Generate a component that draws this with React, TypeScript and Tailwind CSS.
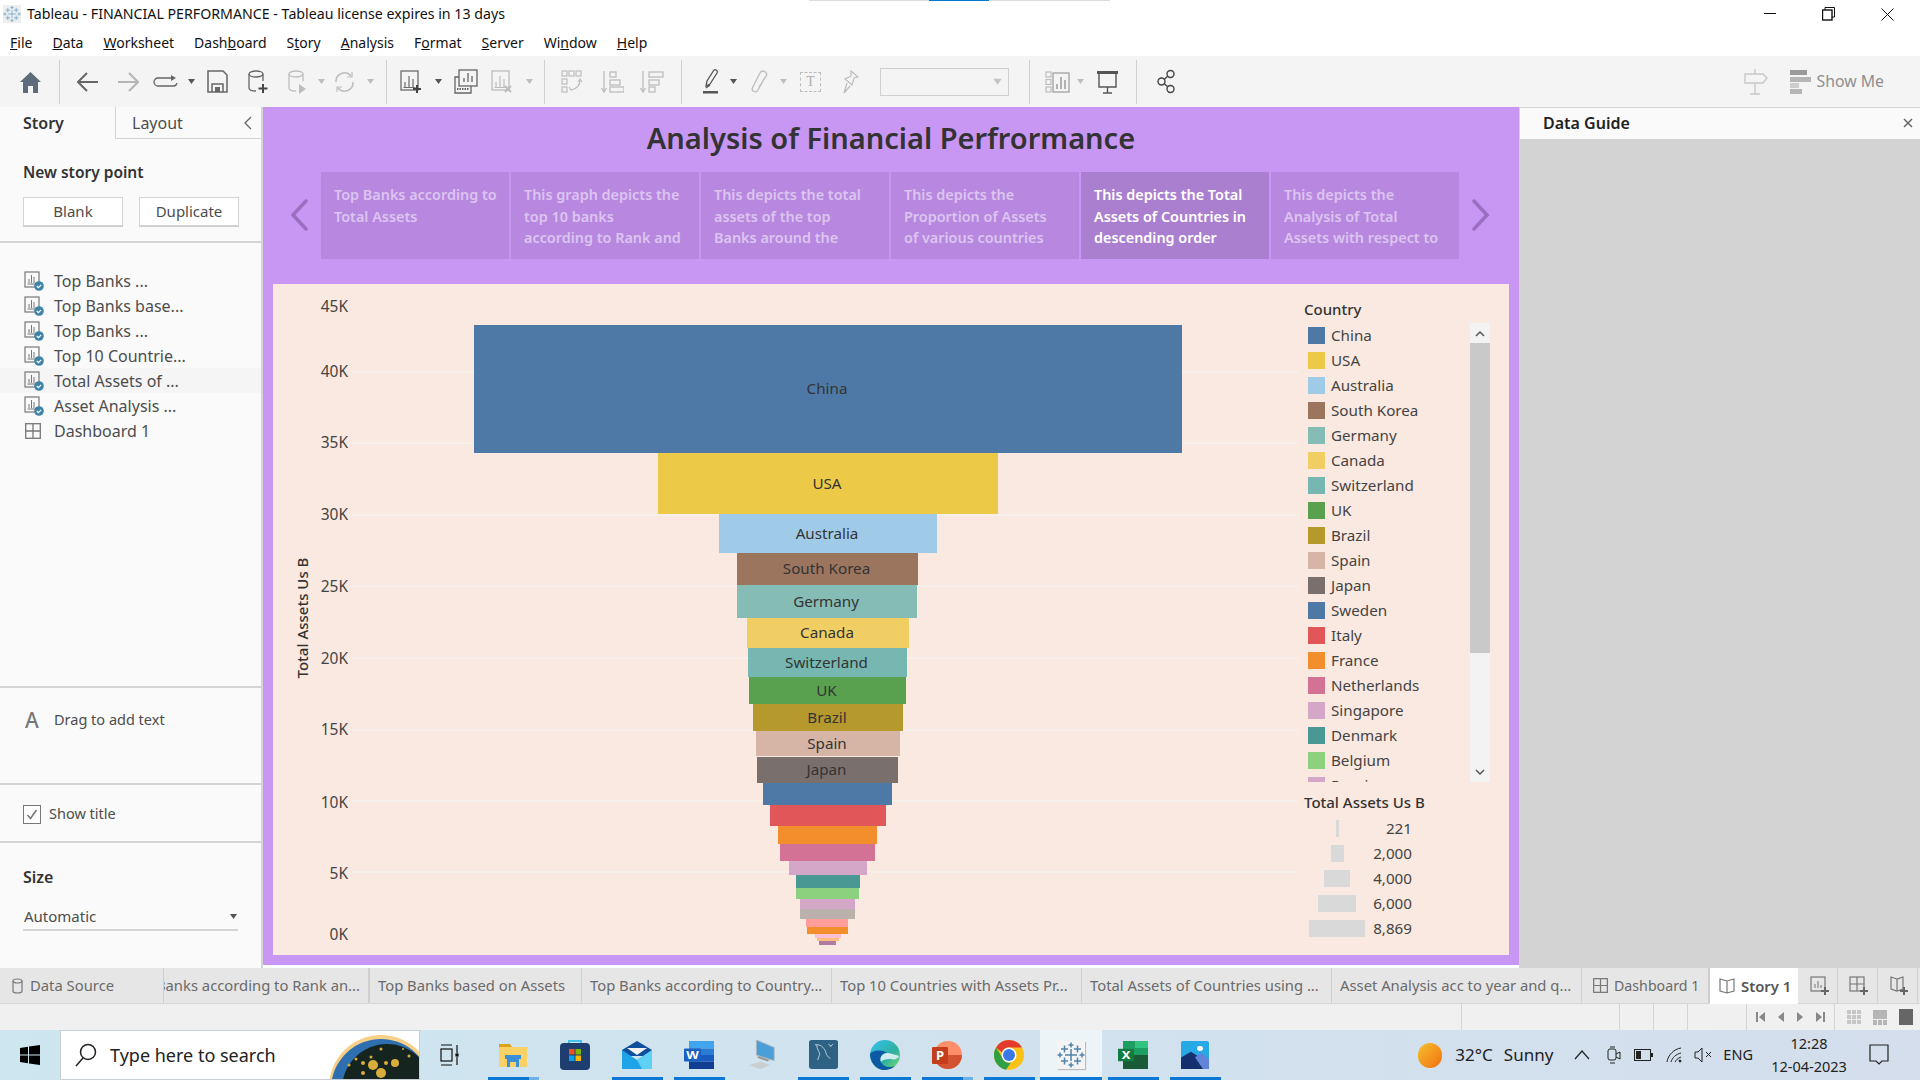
import React from 'react';

const ui = "font-['Noto_Sans','Open_Sans',sans-serif]";

const bars: { x1: number; x2: number; y1: number; y2: number; c: string; label?: string }[] = [
  { x1: 474, x2: 1182, y1: 325, y2: 453, c: '#4e79a7', label: 'China' },
  { x1: 658, x2: 998, y1: 453, y2: 514, c: '#edc948', label: 'USA' },
  { x1: 719, x2: 937, y1: 514, y2: 553, c: '#a0cbe8', label: 'Australia' },
  { x1: 737, x2: 918, y1: 553, y2: 585, c: '#9c755f', label: 'South Korea' },
  { x1: 737, x2: 917, y1: 585, y2: 618, c: '#86bcb6', label: 'Germany' },
  { x1: 747, x2: 909, y1: 618, y2: 648, c: '#f1ce63', label: 'Canada' },
  { x1: 748, x2: 907, y1: 648, y2: 677, c: '#76b7b2', label: 'Switzerland' },
  { x1: 749, x2: 906, y1: 677, y2: 704, c: '#59a14f', label: 'UK' },
  { x1: 753, x2: 903, y1: 704, y2: 731, c: '#b6992d', label: 'Brazil' },
  { x1: 756, x2: 900, y1: 731, y2: 756, c: '#d7b5a6', label: 'Spain' },
  { x1: 757, x2: 898, y1: 757, y2: 783, c: '#79706e', label: 'Japan' },
  { x1: 763, x2: 892, y1: 783, y2: 805, c: '#4e79a7' },
  { x1: 770, x2: 886, y1: 805, y2: 826, c: '#e15759' },
  { x1: 778, x2: 877, y1: 826, y2: 844, c: '#f28e2b' },
  { x1: 780, x2: 875, y1: 844, y2: 861, c: '#d37295' },
  { x1: 789, x2: 867, y1: 861, y2: 875, c: '#d4a6c8' },
  { x1: 796, x2: 860, y1: 875, y2: 888, c: '#499894' },
  { x1: 796, x2: 859, y1: 888, y2: 899, c: '#8cd17d' },
  { x1: 800, x2: 855, y1: 899, y2: 909, c: '#d4a6c8' },
  { x1: 800, x2: 855, y1: 909, y2: 919, c: '#bab0ac' },
  { x1: 806, x2: 848, y1: 919, y2: 927, c: '#ff9d9a' },
  { x1: 807, x2: 848, y1: 927, y2: 934, c: '#f28e2b' },
  { x1: 815, x2: 841, y1: 934, y2: 938, c: '#fabfd2' },
  { x1: 817, x2: 839, y1: 938, y2: 941, c: '#ffbe7d' },
  { x1: 819, x2: 836, y1: 941, y2: 945, c: '#b07aa1' },
];

const legend: [string, string][] = [
  ['China', '#4e79a7'], ['USA', '#edc948'], ['Australia', '#a0cbe8'], ['South Korea', '#9c755f'],
  ['Germany', '#86bcb6'], ['Canada', '#f1ce63'], ['Switzerland', '#76b7b2'], ['UK', '#59a14f'],
  ['Brazil', '#b6992d'], ['Spain', '#d7b5a6'], ['Japan', '#79706e'], ['Sweden', '#4e79a7'],
  ['Italy', '#e15759'], ['France', '#f28e2b'], ['Netherlands', '#d37295'], ['Singapore', '#d4a6c8'],
  ['Denmark', '#499894'], ['Belgium', '#8cd17d'], ['Russia', '#d4a6c8'],
];

const axis: [string, number][] = [
  ['45K', 307], ['40K', 372], ['35K', 443], ['30K', 515], ['25K', 587],
  ['20K', 659], ['15K', 730], ['10K', 803], ['5K', 874], ['0K', 935],
];

const grid = [372, 443, 515, 586, 658, 730, 801, 872];

const storyPoints = [
  ['Top Banks according to', 'Total Assets'],
  ['This graph depicts the', 'top 10 banks', 'according to Rank and'],
  ['This depicts the total', 'assets of the top', 'Banks around the'],
  ['This depicts the', 'Proportion of Assets', 'of various countries'],
  ['This depicts the Total', 'Assets of Countries in', 'descending order'],
  ['This depicts the', 'Analysis of Total', 'Assets with respect to'],
];

const sheets = ['Top Banks ...', 'Top Banks base...', 'Top Banks ...', 'Top 10 Countrie...', 'Total Assets of ...', 'Asset Analysis ...'];

const menu: [string, string, string][] = [
  ['', 'F', 'ile'], ['', 'D', 'ata'], ['', 'W', 'orksheet'], ['Dash', 'b', 'oard'], ['S', 't', 'ory'],
  ['', 'A', 'nalysis'], ['F', 'o', 'rmat'], ['', 'S', 'erver'], ['Wi', 'n', 'dow'], ['', 'H', 'elp'],
];

function Caret({ className = '', color = '#555' }: { className?: string; color?: string }) {
  return (
    <svg width="7" height="5" viewBox="0 0 7 5" className={className}>
      <path d="M0 0h7L3.5 5z" fill={color} />
    </svg>
  );
}

function Sep({ className = '' }: { className?: string }) {
  return <div className={`h-[44px] w-px bg-[#d0d0d0] ${className}`} />;
}

function SheetIcon({ className = '', plus = false, x = false, color = '#6b6b6b' }: { className?: string; plus?: boolean; x?: boolean; color?: string }) {
  return (
    <svg width="22" height="24" viewBox="0 0 22 24" className={className} fill="none">
      <rect x="1" y="1" width="17" height="19" stroke={color} strokeWidth="1.3" />
      <path d="M5 17v-5M9 17V6M13 17V9M3.5 17.5h12" stroke={color} strokeWidth="1.2" />
      {plus && <path d="M17 15v8M13 19h8" stroke="#444" strokeWidth="2" />}
      {x && <path d="M14 16l6 6M20 16l-6 6" stroke={color} strokeWidth="2" />}
    </svg>
  );
}

function DbIcon({ className = '', color = '#666', kind }: { className?: string; color?: string; kind: 'plus' | 'play' }) {
  return (
    <svg width="20" height="26" viewBox="0 0 20 26" className={className} fill="none">
      <path d="M1 5v14c0 2 3 3 7 3M15 5v7" stroke={color} strokeWidth="1.3" />
      <ellipse cx="8" cy="5" rx="7" ry="3" stroke={color} strokeWidth="1.3" />
      {kind === 'plus' ? <path d="M15 15v9M10.500 19.500h9" stroke="#444" strokeWidth="2" /> : <path d="M11 15l7 5-7 5z" fill={color} />}
    </svg>
  );
}

function Toolbar() {
  const off = '#bdbdbd';
  return (
    <div className="flex h-[51px] items-center bg-[#f4f4f4]">
      <svg width="21" height="22" viewBox="0 0 21 22" className="ml-[20px]">
        <path d="M10.500 1L0 11h3v11h5v-7h5v7h5V11h3z" fill="#5d6b7a" />
      </svg>
      <Sep className="ml-[18px]" />
      <svg width="22" height="20" viewBox="0 0 22 20" className="ml-[17px]" fill="none">
        <path d="M21 10H2M10 1l-9 9 9 9" stroke="#666" strokeWidth="2" />
      </svg>
      <svg width="22" height="20" viewBox="0 0 22 20" className="ml-[18px]" fill="none">
        <path d="M1 10h19M12 1l9 9-9 9" stroke="#b4b4b4" strokeWidth="2" />
      </svg>
      <svg width="26" height="14" viewBox="0 0 26 14" className="ml-[14px]" fill="none">
        <path d="M19 3H5a4 4 0 0 0 0 8h16a4 4 0 0 0 3-3" stroke="#666" strokeWidth="1.300" />
        <path d="M18 0l5 3-5 3z" fill="#666" />
      </svg>
      <Caret className="ml-[9px]" />
      <svg width="21" height="23" viewBox="0 0 21 23" className="ml-[12px]" fill="none">
        <path d="M1 1h15l4 4v17H1z" stroke="#666" strokeWidth="1.500" />
        <path d="M5 22v-8h11v8" stroke="#666" strokeWidth="1.500" />
        <rect x="8" y="17" width="5" height="5" fill="#666" />
      </svg>
      <DbIcon className="ml-[20px]" kind="plus" />
      <DbIcon className="ml-[20px]" kind="play" color={off} />
      <Caret className="ml-[10px]" color={off} />
      <svg width="21" height="22" viewBox="0 0 21 22" className="ml-[9px]" fill="none">
        <path d="M2 11a8.500 8.500 0 0 1 15-6M19 11a8.500 8.500 0 0 1-15 6" stroke={off} strokeWidth="1.500" />
        <path d="M18 1v5h-5M3 21v-5h5" stroke={off} strokeWidth="1.200" />
      </svg>
      <Caret className="ml-[12px]" color={off} />
      <Sep className="ml-[12px]" />
      <SheetIcon className="ml-[13px]" plus />
      <Caret className="ml-[13px]" />
      <svg width="24" height="25" viewBox="0 0 24 25" className="ml-[12px]" fill="none">
        <rect x="5" y="1" width="18" height="16" fill="#f4f4f4" stroke="#666" strokeWidth="1.300" />
        <path d="M10 13V9M14 13V4M18 13V7" stroke="#666" strokeWidth="1.300" />
        <path d="M5 8H1v16h16v-7" stroke="#666" strokeWidth="1.300" />
        <path d="M3 20h12" stroke="#666" strokeWidth="2" strokeDasharray="1.500 1" />
      </svg>
      <SheetIcon className="ml-[13px]" x color={off} />
      <Caret className="ml-[13px]" color={off} />
      <Sep className="ml-[11px]" />
      <svg width="22" height="24" viewBox="0 0 22 24" className="ml-[16px]" fill="none" stroke={off} strokeWidth="1.200">
        <rect x="1" y="1" width="5" height="5" /><rect x="8" y="1" width="5" height="5" /><rect x="15" y="1" width="5" height="5" />
        <rect x="1" y="9" width="5" height="5" /><rect x="1" y="17" width="5" height="5" />
        <path d="M19 10c0 7-4 9-9 10M8 17l2 3 3-1M17 12l2-3 2 3" />
      </svg>
      <svg width="23" height="24" viewBox="0 0 23 24" className="ml-[18px]" fill="none" stroke={off} strokeWidth="1.300">
        <path d="M3 1v20M0.500 18L3 22l2.500-4" />
        <rect x="9" y="2" width="6" height="5" /><rect x="9" y="10" width="10" height="5" /><rect x="9" y="17" width="14" height="5" />
      </svg>
      <svg width="24" height="24" viewBox="0 0 24 24" className="ml-[16px]" fill="none" stroke={off} strokeWidth="1.300">
        <path d="M3 1v20M0.500 18L3 22l2.500-4" />
        <rect x="9" y="2" width="14" height="5" /><rect x="9" y="10" width="10" height="5" /><rect x="9" y="17" width="6" height="5" />
      </svg>
      <Sep className="ml-[17px]" />
      <svg width="17" height="26" viewBox="0 0 17 26" className="ml-[21px]" fill="none">
        <path d="M3 17l1-5L11 1c2-1 4 1 3 3L7 15zM3 19l4-3" stroke="#555" strokeWidth="1.300" />
        <rect x="0" y="22" width="15" height="2.500" fill="#555" />
      </svg>
      <Caret className="ml-[10px]" />
      <svg width="17" height="24" viewBox="0 0 17 24" className="ml-[14px]" fill="none">
        <path d="M14 7L7 20a3 3 0 0 1-5.500-2.500L9 3a3.500 3.500 0 0 1 6.500 2.500L8 17" stroke={off} strokeWidth="1.300" />
      </svg>
      <Caret className="ml-[12px]" color={off} />
      <div className="ml-[13px] flex h-[20px] w-[21px] items-center justify-center border border-dashed border-[#bdbdbd] text-[14px] text-[#b0b0b0] font-['Liberation_Serif',serif]">T</div>
      <svg width="17" height="24" viewBox="0 0 17 24" className="ml-[21px]" fill="none">
        <path d="M9 1l7 6-4 1-2 7-7-6 6-3zM5 13l-3 10 6-7" stroke={off} strokeWidth="1.200" />
      </svg>
      <div className="ml-[21px] flex h-[28px] w-[129px] items-center justify-end border border-[#cfcfcf] pr-[7px]">
        <Caret color="#c4c4c4" className="scale-125" />
      </div>
      <Sep className="ml-[20px]" />
      <svg width="25" height="22" viewBox="0 0 25 22" className="ml-[15px]" fill="none">
        <g stroke={off} strokeWidth="1.200">
          <rect x="1" y="1" width="5" height="5" /><rect x="1" y="8.500" width="5" height="5" /><rect x="1" y="16" width="5" height="5" />
          <rect x="8" y="2" width="16" height="19" stroke="#9a9a9a" />
        </g>
        <path d="M12 18v-5M16 18V6M20 18v-9" stroke="#9a9a9a" strokeWidth="1.500" />
      </svg>
      <Caret className="ml-[7px]" color={off} />
      <svg width="21" height="24" viewBox="0 0 21 24" className="ml-[13px]" fill="none">
        <rect x="0" y="1" width="21" height="3" fill="#555" />
        <path d="M2 4v13h17V4M10.500 17v6M6 23h9" stroke="#555" strokeWidth="1.400" />
      </svg>
      <Sep className="ml-[18px]" />
      <svg width="19" height="25" viewBox="0 0 19 25" className="ml-[20px]" fill="none" stroke="#444" strokeWidth="1.400">
        <circle cx="13.500" cy="5" r="3.500" /><circle cx="4.500" cy="12.500" r="3.500" /><circle cx="13.500" cy="20" r="3.500" />
        <path d="M7 10.500l4-3.500M7 14.500l4 3.500" />
      </svg>
      <svg width="24" height="28" viewBox="0 0 24 28" className="ml-auto" fill="none" stroke="#c8c8c8" strokeWidth="1.400">
        <path d="M1 6h18l4 4-4 5H1zM11 1v5M11 15v11M6 26h10" />
      </svg>
      <svg width="21" height="24" viewBox="0 0 21 24" className="ml-[22px]">
        <rect x="0" y="0" width="17" height="5" fill="#9a9a9a" /><rect x="0" y="7" width="21" height="5" fill="#b5b5b5" />
        <rect x="0" y="13" width="9" height="5" fill="#cdcdcd" /><rect x="0" y="19" width="12" height="5" fill="#b5b5b5" />
      </svg>
      <span className={`ml-[6px] mr-[36px] text-[15.800px] text-[#8f8f8f] ${ui}`}>Show Me</span>
    </div>
  );
}

function SideSheetIcon() {
  return (
    <svg width="20" height="20" viewBox="0 0 20 20" fill="none" className="shrink-0">
      <rect x="1" y="1" width="14" height="15" stroke="#777" strokeWidth="1.200" />
      <path d="M5 12V8M7.500 12V4M10 12V6M3.500 13h8" stroke="#777" strokeWidth="1" />
      <circle cx="15" cy="15" r="4.800" fill="#3f84a8" />
      <path d="M12.800 15l1.600 1.600 2.800-2.800" stroke="#fff" strokeWidth="1.200" />
    </svg>
  );
}

function GridIcon({ size = 16 }: { size?: number }) {
  return (
    <svg width={size} height={size} viewBox="0 0 16 16" fill="none" className="shrink-0">
      <rect x="0.700" y="0.700" width="14.600" height="14.600" stroke="#777" strokeWidth="1.300" />
      <path d="M8 1v14M1 8h14" stroke="#777" strokeWidth="1.300" />
    </svg>
  );
}

function LeftPanel() {
  return (
    <aside className={`flex h-full w-[263px] shrink-0 flex-col border-r-2 border-[#d4d4d4] bg-[#fafafa] text-[#4d4d4d] ${ui}`}>
      <div className="flex h-[32px] shrink-0 text-[16px]">
        <div className="flex w-[115px] items-center pl-[23px] font-semibold text-[#333]">Story</div>
        <div className="flex flex-1 items-center justify-between border-b border-l border-[#d4d4d4] pl-[16px] pr-[9px]">
          <span>Layout</span>
          <svg width="8" height="14" viewBox="0 0 8 14" fill="none"><path d="M7 1L1 7l6 6" stroke="#666" strokeWidth="1.300" /></svg>
        </div>
      </div>
      <div className="h-[104px] shrink-0 border-b-2 border-[#d4d4d4] pl-[23px] pt-[22px]">
        <div className="text-[15.500px] font-semibold leading-[22px] text-[#333]">New story point</div>
        <div className="mt-[14px] flex gap-[16px] text-[15px]">
          <div className="flex h-[29px] w-[100px] items-center justify-center border border-[#d4d4d4] bg-white shadow-[0_1px_0_#ccc]">Blank</div>
          <div className="flex h-[29px] w-[100px] items-center justify-center border border-[#d4d4d4] bg-white shadow-[0_1px_0_#ccc]">Duplicate</div>
        </div>
      </div>
      <div className="h-[445px] shrink-0 border-b-2 border-[#d4d4d4] pt-[25px] text-[16px]">
        {sheets.map((s, i) => (
          <div key={i} className={`flex h-[25px] items-center gap-[10px] pl-[24px] ${i === 4 ? 'bg-[#f5f5f5]' : ''}`}>
            <SideSheetIcon />
            <span>{s}</span>
          </div>
        ))}
        <div className="flex h-[25px] items-center gap-[13px] pl-[25px]">
          <GridIcon />
          <span>Dashboard 1</span>
        </div>
      </div>
      <div className="h-[97px] shrink-0 border-b-2 border-[#d4d4d4] pl-[25px] pt-[19px] text-[14.500px]">
        <div className="flex items-center gap-[15px]">
          <span className="w-[14px] text-[21px] font-medium leading-[26px] text-[#777]">A</span>
          <span>Drag to add text</span>
        </div>
      </div>
      <div className="flex h-[58px] shrink-0 items-center gap-[8px] border-b-2 border-[#d4d4d4] pl-[23px] pt-[2px] text-[14.500px]">
        <div className="flex h-[19px] w-[18px] items-center justify-center border border-[#777] bg-white">
          <svg width="12" height="11" viewBox="0 0 12 11" fill="none"><path d="M1.500 6l3 3.500L10.500 1" stroke="#777" strokeWidth="1.600" /></svg>
        </div>
        <span>Show title</span>
      </div>
      <div className="flex-1 pl-[23px] pr-[23px] pt-[23px]">
        <div className="text-[16px] font-semibold leading-[22px] text-[#333]">Size</div>
        <div className="mt-[15px] flex h-[28px] items-center justify-between border-b-2 border-[#d4d4d4] px-px text-[15px]">
          <span>Automatic</span>
          <Caret />
        </div>
      </div>
    </aside>
  );
}

function Chart() {
  return (
    <svg width="1030" height="671" viewBox="273 284 1030 671" className={`shrink-0 ${ui}`}>
      {grid.map(y => (
        <line key={y} x1="352" x2="1298" y1={y} y2={y} stroke="#f6f1ed" strokeWidth="1.500" />
      ))}
      {bars.map((b, i) => (
        <rect key={i} x={b.x1} y={b.y1} width={b.x2 - b.x1} height={b.y2 - b.y1} fill={b.c} />
      ))}
      {bars.filter(b => b.label).map(b => (
        <text key={b.label} x={(b.x1 + b.x2) / 2 - 1} y={(b.y1 + b.y2) / 2 + 5} textAnchor="middle" fontSize="15.200" fill="#333">{b.label}</text>
      ))}
      {axis.map(([t, y]) => (
        <text key={t} x="348" y={y + 5} textAnchor="end" fontSize="15.500" fill="#444">{t}</text>
      ))}
      <text x="0" y="0" transform="translate(308 618) rotate(-90)" textAnchor="middle" fontSize="15" fontWeight="500" fill="#333">Total Assets Us B</text>
    </svg>
  );
}

function Legends() {
  const sizes: [string, string, string][] = [
    ['221', 'w-[3px]', 'ml-[27px]'],
    ['2,000', 'w-[13px]', 'ml-[22px]'],
    ['4,000', 'w-[26px]', 'ml-[15px]'],
    ['6,000', 'w-[38px]', 'ml-[9px]'],
    ['8,869', 'w-[56px]', 'ml-0'],
  ];
  return (
    <div className={`flex flex-1 flex-col pl-[1px] pt-[14px] text-[15.200px] text-[#444] ${ui}`}>
      <div className="text-[15px] font-medium leading-[22px] text-[#333]">Country</div>
      <div className="mt-[3px] flex h-[459px]">
        <div className="h-full w-[166px] overflow-hidden">
          {legend.map(([name, c]) => (
            <div key={name} className="flex h-[25px] shrink-0 items-center gap-[6px] pl-[4px]">
              <span className="h-[17px] w-[17px] shrink-0" style={{ background: c }} />
              <span>{name}</span>
            </div>
          ))}
        </div>
        <div className="flex h-full w-[20px] flex-col bg-[#f3f3f3]">
          <div className="flex h-[20px] items-center justify-center">
            <svg width="10" height="7" viewBox="0 0 10 7" fill="none"><path d="M1 6l4-4 4 4" stroke="#555" strokeWidth="1.500" /></svg>
          </div>
          <div className="h-[310px] bg-[#c9c9c9]" />
          <div className="flex-1" />
          <div className="flex h-[20px] items-center justify-center">
            <svg width="10" height="7" viewBox="0 0 10 7" fill="none"><path d="M1 1l4 4 4-4" stroke="#555" strokeWidth="1.500" /></svg>
          </div>
        </div>
      </div>
      <div className="mt-[9px] text-[15px] font-medium leading-[22px] text-[#333]">Total Assets Us B</div>
      <div className="mt-[3px] pl-[5px]">
        {sizes.map(([t, w, ml]) => (
          <div key={t} className="flex h-[25px] w-[103px] items-center">
            <span className={`h-[17px] bg-[#d9d9d9] ${w} ${ml}`} />
            <span className="ml-auto">{t}</span>
          </div>
        ))}
      </div>
    </div>
  );
}

function StoryPanel() {
  return (
    <main className={`flex h-[858px] w-[1256px] shrink-0 flex-col bg-[#c896f3] ${ui}`}>
      <h1 className="flex h-[62px] shrink-0 items-center justify-center text-[29px] font-semibold text-[#333]">Analysis of Financial Perfrormance</h1>
      <div className="mt-[3px] flex h-[87px] shrink-0 items-center">
        <div className="flex w-[58px] justify-center pl-[14px] pb-[2px]">
          <svg width="18" height="32" viewBox="0 0 18 32" fill="none"><path d="M16 2L3 16l13 14" stroke="#9a6fc0" strokeWidth="3.500" strokeLinecap="round" /></svg>
        </div>
        <div className="flex gap-[2px]">
          {storyPoints.map((lines, i) => (
            <div key={i} className={`h-[87px] w-[188px] overflow-hidden px-[13px] pt-[12px] text-[14.400px] font-semibold leading-[21.500px] ${i === 4 ? 'bg-[#ab7fcf] text-white' : 'bg-[#b888e0] text-[#dcc4f0]'}`}>
              {lines.map(l => <div key={l} className="whitespace-nowrap">{l}</div>)}
            </div>
          ))}
        </div>
        <div className="flex flex-1 justify-center pb-[2px] pr-[16px]">
          <svg width="18" height="32" viewBox="0 0 18 32" fill="none"><path d="M2 2l13 14L2 30" stroke="#9a6fc0" strokeWidth="3.500" strokeLinecap="round" /></svg>
        </div>
      </div>
      <div className="ml-[10px] mt-[25px] flex h-[671px] w-[1236px] bg-[#fae9e0]">
        <Chart />
        <Legends />
      </div>
    </main>
  );
}

function RightPanel() {
  return (
    <aside className={`flex h-full flex-1 flex-col border-l border-t border-[#d4d4d4] bg-[#d3d3d3] ${ui}`}>
      <div className="flex h-[31px] items-center justify-between bg-[#fafafa] pb-[1px] pl-[23px] pr-[7px]">
        <span className="text-[16px] font-semibold text-[#222]">Data Guide</span>
        <svg width="10" height="10" viewBox="0 0 10 10" fill="none"><path d="M1 1l8 8M9 1L1 9" stroke="#666" strokeWidth="1.500" /></svg>
      </div>
    </aside>
  );
}

function Tab({ children, w, first = false }: { children: React.ReactNode; w: string; first?: boolean }) {
  return (
    <div className={`flex h-full shrink-0 items-center overflow-hidden whitespace-nowrap border-r border-[#cfcfcf] ${w} ${first ? 'pl-[12px]' : 'pl-[8px]'}`}>
      {children}
    </div>
  );
}

function SheetTabs() {
  return (
    <div className={`flex h-[36px] items-stretch border-b border-[#d6d6d6] bg-[#e6e6e6] text-[14.800px] text-[#6a6a6a] ${ui}`}>
      <Tab w="w-[164px]" first>
        <svg width="11" height="16" viewBox="0 0 11 16" fill="none" className="mr-[7px]">
          <path d="M1 3v10c0 1.500 1.800 2 4.500 2s4.500-.5 4.500-2V3" stroke="#777" strokeWidth="1.200" />
          <ellipse cx="5.500" cy="3" rx="4.500" ry="2" stroke="#777" strokeWidth="1.200" />
        </svg>
        Data Source
      </Tab>
      <div className="flex h-full w-[206px] shrink-0 items-center justify-end overflow-hidden whitespace-nowrap border-r-2 border-[#cfcfcf] pr-[8px]">Top Banks according to Rank an...</div>
      <Tab w="w-[212px]">Top Banks based on Assets</Tab>
      <Tab w="w-[250px]">Top Banks according to Country...</Tab>
      <Tab w="w-[250px]">Top 10 Countries with Assets Pr...</Tab>
      <Tab w="w-[250px]">Total Assets of Countries using ...</Tab>
      <Tab w="w-[250px]">Asset Analysis acc to year and q...</Tab>
      <div className="flex h-full w-[128px] shrink-0 items-center gap-[6px] border-r-2 border-[#cfcfcf] pl-[11px] text-[14.200px]">
        <GridIcon size={15} />Dashboard 1
      </div>
      <div className="flex h-[36px] w-[88px] shrink-0 items-center gap-[6px] bg-white pl-[9px] font-semibold text-[#555]">
        <svg width="16" height="16" viewBox="0 0 16 16" fill="none"><path d="M8 3L1 1v12l7 2 7-2V1zM8 3v12" stroke="#777" strokeWidth="1.200" /></svg>
        Story 1
      </div>
      {[0, 1, 2].map(i => (
        <div key={i} className={`flex w-[40px] shrink-0 items-center justify-center border-r border-[#cfcfcf] ${i === 0 ? 'pl-[4px]' : 'pl-[2px]'}`}>
          <svg width="20" height="20" viewBox="0 0 20 20" fill="none">
            {i === 0 && <><rect x="1" y="1" width="14" height="14" stroke="#777" strokeWidth="1.200" /><path d="M5 12V8M8 12V5M11 12V9" stroke="#777" /></>}
            {i === 1 && <><rect x="1" y="1" width="14" height="14" stroke="#777" strokeWidth="1.200" /><path d="M8 1v14M1 8h14" stroke="#777" strokeWidth="1.200" /></>}
            {i === 2 && <path d="M8 3L2 1v12l6 2 6-2V1zM8 3v12" stroke="#777" strokeWidth="1.200" />}
            <path d="M15 11v8M11 15h8" stroke="#666" strokeWidth="2" />
          </svg>
        </div>
      ))}
    </div>
  );
}

function StatusBar() {
  return (
    <div className="flex h-[26px] items-stretch bg-[#f0f0f0]">
      <div className="w-[1462px] shrink-0 border-r border-[#d4d4d4]" />
      <div className="w-[158px] shrink-0 border-r border-[#d4d4d4]" />
      <div className="w-[34px] shrink-0 border-r border-[#d4d4d4]" />
      <div className="w-[34px] shrink-0 border-r border-[#d4d4d4]" />
      <div className="w-[59px] shrink-0 border-r border-[#d4d4d4]" />
      <div className="flex w-[88px] shrink-0 items-center justify-center gap-[13px] border-r border-[#d4d4d4]">
        <svg width="9" height="10" viewBox="0 0 9 10"><path d="M0 0h2v10H0zM9 0v10L3 5z" fill="#888" /></svg>
        <svg width="6" height="10" viewBox="0 0 6 10"><path d="M6 0v10L0 5z" fill="#888" /></svg>
        <svg width="6" height="10" viewBox="0 0 6 10"><path d="M0 0v10l6-5z" fill="#888" /></svg>
        <svg width="9" height="10" viewBox="0 0 9 10"><path d="M7 0h2v10H7zM0 0v10l6-5z" fill="#888" /></svg>
      </div>
      <div className="flex flex-1 items-center gap-[12px] pl-[12px]">
        <svg width="14" height="15" viewBox="0 0 14 15" fill="#c6c6c6">
          {[0, 5, 10].flatMap(x => [0, 5, 10].map(y => <rect key={`${x}-${y}`} x={x} y={y} width="4" height="4" />))}
        </svg>
        <svg width="14" height="15" viewBox="0 0 14 15"><rect width="14" height="9" fill="#b5b5b5" /><rect y="10" width="4" height="5" fill="#b5b5b5" /><rect x="5" y="10" width="4" height="5" fill="#b5b5b5" /><rect x="10" y="10" width="4" height="5" fill="#b5b5b5" /></svg>
        <svg width="14" height="16" viewBox="0 0 14 16"><rect width="14" height="16" fill="#666" /></svg>
      </div>
    </div>
  );
}

function TableauMark({ size = 28, thin = false }: { size?: number; thin?: boolean }) {
  const c = thin ? '#7fb0cf' : '#4f83a8';
  const pluses: [number, number, number][] = [[14, 14, 6], [7.500, 8, 3.500], [20.500, 8, 3.500], [7.500, 20, 3.500], [20.500, 20, 3.500], [14, 4, 2.500], [14, 24, 2.500], [3, 14, 2.500], [25, 14, 2.500]];
  return (
    <svg width={size} height={size} viewBox="0 0 28 28" fill="none">
      {pluses.map(([x, y, r], i) => (
        <path key={i} d={`M${x - r} ${y}h${r * 2}M${x} ${y - r}v${r * 2}`} stroke={c} strokeWidth="1.500" />
      ))}
    </svg>
  );
}

function Taskbar() {
  return (
    <div className={`flex h-[50px] items-center bg-gradient-to-r from-[#cde6ef] to-[#d4deec] ${ui}`}>
      <svg width="20" height="20" viewBox="0 0 20 20" className="ml-[20px]" fill="#000">
        <path d="M0 3l8-1.200v7.700H0zM9 1.600L20 0v9.500H9zM0 10.500h8v7.700L0 17zM9 10.500h11V20L9 18.400z" />
      </svg>
      <div className="relative ml-[20px] flex h-[50px] w-[360px] items-center overflow-hidden border border-[#c8d0d6] bg-white">
        <svg width="22" height="24" viewBox="0 0 22 24" className="ml-[14px]" fill="none" stroke="#222" strokeWidth="1.500">
          <circle cx="13" cy="9" r="7.500" /><path d="M8 15l-7 8" />
        </svg>
        <span className="ml-[13px] text-[18px] text-[#222]">Type here to search</span>
        <svg width="100" height="44" viewBox="0 0 100 44" className="absolute bottom-0 right-0">
          <circle cx="62" cy="52" r="52" fill="#f6d089" />
          <circle cx="62" cy="54" r="50" fill="#2e6fb0" />
          <circle cx="68" cy="54" r="45" fill="#16241f" />
          <path d="M70 54c8-8 20-8 30-2v10H70z" fill="#2b6aa8" />
          {[[44, 28, 2], [52, 22, 1.500], [62, 14, 1.500], [44, 38, 2], [54, 30, 5], [67, 28, 2], [76, 28, 4], [90, 21, 1.500], [30, 30, 1.500], [37, 24, 1.500], [62, 38, 5], [84, 14, 1]].map(([x, y, r], i) => (
            <circle key={i} cx={x} cy={y} r={r} fill="#d9ad3c" />
          ))}
        </svg>
      </div>
      <TaskIcons />
      <Tray />
    </div>
  );
}

function TaskSlot({ children, under = false, stacked = false, active = false }: { children: React.ReactNode; under?: boolean; stacked?: boolean; active?: boolean }) {
  return (
    <div className={`relative flex h-[50px] w-[62px] shrink-0 items-center justify-center pb-[1px] ${active ? 'bg-[#edf4f8]' : ''}`}>
      {children}
      {under && (
        <div className={`absolute bottom-0 flex h-[3px] ${active ? 'left-0 w-[62px]' : 'left-[6px] w-[51px]'} bg-[#0a78d4]`}>
          {stacked && <div className="ml-auto h-full w-[10px] bg-[#6fb1e6]" />}
        </div>
      )}
    </div>
  );
}

function TaskIcons() {
  return (
    <div className="flex h-[50px] items-center">
      <TaskSlot>
        <svg width="20" height="24" viewBox="0 0 20 24" className="mr-[5px]" fill="none" stroke="#111" strokeWidth="1.200">
          <rect x="2" y="6" width="11" height="12" /><path d="M2 2h11M2 22h11M18 2v8M18 14v8" /><rect x="17" y="11" width="2" height="2" fill="#111" />
        </svg>
      </TaskSlot>
      <TaskSlot under stacked>
        <svg width="28" height="24" viewBox="0 0 28 24">
          <path d="M0 1h11l2 3h15v4H0z" fill="#dba21a" /><rect y="4" width="28" height="20" rx="1" fill="#fad165" />
          <path d="M8 24V15h12v9h-3v-5h-6v5z" fill="#3a8fd6" /><rect x="6" y="12" width="16" height="4" fill="#3a8fd6" />
        </svg>
      </TaskSlot>
      <TaskSlot>
        <svg width="30" height="30" viewBox="0 0 30 30">
          <path d="M9 4V1h12v3" fill="none" stroke="#40c4f0" strokeWidth="2" />
          <rect y="3" width="30" height="27" rx="4" fill="#1d3e6e" />
          <rect x="9" y="9" width="5.500" height="5.500" fill="#f25022" /><rect x="15.500" y="9" width="5.500" height="5.500" fill="#7fba00" />
          <rect x="9" y="15.500" width="5.500" height="5.500" fill="#00a4ef" /><rect x="15.500" y="15.500" width="5.500" height="5.500" fill="#ffb900" />
        </svg>
      </TaskSlot>
      <TaskSlot under>
        <svg width="30" height="28" viewBox="0 0 30 28">
          <path d="M0 9L15 0l15 9v6H0z" fill="#0f4f9e" />
          <path d="M5 7h20l-10 7z" fill="#f2f2f2" />
          <path d="M0 9l15 10L30 9v19H0z" fill="#1ea2e8" /><path d="M15 19L30 9v19H20z" fill="#5fd0f5" />
        </svg>
      </TaskSlot>
      <TaskSlot under>
        <svg width="30" height="28" viewBox="0 0 30 34" preserveAspectRatio="none">
          <rect x="5" y="0" width="25" height="9" fill="#41a5ee" /><rect x="5" y="9" width="25" height="8" fill="#2b7cd3" />
          <rect x="5" y="17" width="25" height="8" fill="#185abd" /><rect x="5" y="25" width="25" height="9" fill="#103f91" />
          <rect x="0" y="9" width="17" height="16" rx="1" fill="#1a5fc4" />
          <text x="8.500" y="22" textAnchor="middle" fontSize="13" fontWeight="700" fill="#fff">W</text>
        </svg>
      </TaskSlot>
      <TaskSlot>
        <svg width="28" height="30" viewBox="0 0 28 32" className="ml-[2px]">
          <path d="M8 0l19 8v14L8 16z" fill="#4a9fd8" stroke="#b0b8be" /><path d="M10 17l12 4-2 2-11-4z" fill="#999" />
          <path d="M0 27l13-4 10 4-11 4z" fill="#c9ced2" />
        </svg>
      </TaskSlot>
      <TaskSlot under>
        <svg width="29" height="29" viewBox="0 0 30 36" preserveAspectRatio="none">
          <rect width="30" height="36" rx="3" fill="#2e6285" />
          <path d="M6 6c6-1 9 3 11 8 1 4 2 7 5 9M8 6c0 6 3 8 3 12l-2 7M22 8l3-3M20 5l3 3" fill="none" stroke="#c9d6de" strokeWidth="1" />
        </svg>
      </TaskSlot>
      <TaskSlot under>
        <svg width="30" height="30" viewBox="0 2 30 30">
          <defs>
            <linearGradient id="edgeA" x1="0" y1="0" x2="1" y2="1"><stop offset="0" stopColor="#35c1f1" /><stop offset="0.600" stopColor="#2fb0a0" /><stop offset="1" stopColor="#7fe06a" /></linearGradient>
          </defs>
          <circle cx="15" cy="17" r="15" fill="url(#edgeA)" />
          <path d="M0 17C1 27 9 33 16 32c4-1 7-2 9-4-6 2-12 1-14-4-2-5 2-9 6-9-4-4-17-3-17 2z" fill="#0c59a4" />
          <path d="M11 24c-2-5 2-9 6-9 3 0 6 1 12 3-1 3-5 4-8 3-3 0-8 0-10 3z" fill="#d1e9ef" />
        </svg>
      </TaskSlot>
      <TaskSlot under stacked>
        <svg width="30" height="30" viewBox="0 3 30 28">
          <circle cx="16" cy="17" r="14" fill="#ff8f6b" /><path d="M16 17h14a14 14 0 0 1-14 14 14 14 0 0 1-14-14z" fill="#d35230" />
          <rect y="9" width="16" height="17" rx="1" fill="#c43e1c" />
          <text x="8" y="22" textAnchor="middle" fontSize="13" fontWeight="700" fill="#fff">P</text>
        </svg>
      </TaskSlot>
      <TaskSlot under>
        <svg width="30" height="30" viewBox="0 3 30 30">
          <circle cx="15" cy="18" r="15" fill="#fbc116" />
          <path d="M15 3a15 15 0 0 1 13 7.500H15a7.500 7.500 0 0 0-7 5L2 10.500A15 15 0 0 1 15 3z" fill="#e33b2e" />
          <path d="M2 10.500l7 11a7 7 0 0 0 8 4l-5 7.300A15 15 0 0 1 2 10.500z" fill="#319f43" />
          <circle cx="15" cy="18" r="7.500" fill="#fff" /><circle cx="15" cy="18" r="6" fill="#3b78e7" />
        </svg>
      </TaskSlot>
      <TaskSlot under active>
        <div className="bg-[#f4f4f4] shadow-[1px_1px_1px_#bbb]"><TableauMark size={28} /></div>
      </TaskSlot>
      <TaskSlot under>
        <svg width="30" height="28" viewBox="0 0 30 36" preserveAspectRatio="none">
          <rect x="5" y="0" width="25" height="36" fill="#1d9f63" /><rect x="17" y="0" width="13" height="9" fill="#33c481" />
          <rect x="5" y="18" width="25" height="18" fill="#185c37" />
          <rect x="0" y="10" width="16" height="16" fill="#107c41" />
          <text x="8" y="23" textAnchor="middle" fontSize="13" fontWeight="700" fill="#fff">X</text>
        </svg>
      </TaskSlot>
      <TaskSlot under>
        <svg width="28" height="28" viewBox="0 0 28 34" preserveAspectRatio="none">
          <rect width="28" height="34" rx="2" fill="#27a9e6" /><circle cx="19" cy="9" r="3" fill="#fff" />
          <path d="M0 34V20l10-7 18 14v7z" fill="#14306e" /><path d="M14 20l6-6 8 8v12H22z" fill="#5f84d8" />
        </svg>
      </TaskSlot>
    </div>
  );
}

function Tray() {
  return (
    <div className="relative ml-auto flex h-[50px] items-center text-[#222]">
      <div className="h-[25px] w-[24px] rounded-full bg-gradient-to-br from-[#f3c02c] to-[#f26d0f]" />
      <span className="ml-[13px] text-[17px]">32°C</span>
      <span className="ml-[11px] text-[17px]">Sunny</span>
      <svg width="16" height="10" viewBox="0 0 16 10" className="ml-[21px]" fill="none"><path d="M1 9l7-8 7 8" stroke="#222" strokeWidth="1.200" /></svg>
      <svg width="14" height="20" viewBox="0 0 14 20" className="ml-[17px]" fill="none" stroke="#222"><rect x="1" y="4" width="8" height="11" rx="2" /><path d="M9 9l4-2v7l-4-2M3 2h5M3 18h5" /></svg>
      <svg width="19" height="12" viewBox="0 0 19 12" className="ml-[13px]" fill="none"><rect x="0.500" y="0.500" width="16" height="11" stroke="#222" /><rect x="2" y="2" width="5" height="8" fill="#222" /><rect x="17" y="4" width="2" height="4" fill="#222" /></svg>
      <svg width="16" height="16" viewBox="0 0 16 16" className="ml-[13px]" fill="none" stroke="#222"><path d="M1 15C2 8 8 2 15 1M5 15c1-4 5-8 10-9M9 15c1-2 3-4 6-5" /><circle cx="14" cy="14" r="1" fill="#222" /></svg>
      <svg width="18" height="16" viewBox="0 0 18 16" className="ml-[12px]" fill="none" stroke="#222"><path d="M1 5h3l4-4v14l-4-4H1zM12 5l5 5M17 5l-5 5" /></svg>
      <span className="ml-[11px] text-[14.500px]">ENG</span>
      <div className="ml-[18px] flex w-[76px] flex-col items-center text-[14.500px] leading-[23px]">
        <span>12:28</span>
        <span className="whitespace-nowrap">12-04-2023</span>
      </div>
      <svg width="20" height="22" viewBox="0 0 20 22" className="ml-[22px] mr-[31px]" fill="none" stroke="#222" strokeWidth="1.200">
        <path d="M1 1h18v16h-6l-3 3-3-3H1z" />
      </svg>
    </div>
  );
}

export default function App() {
  return (
    <div className="relative flex h-[1080px] w-[1920px] flex-col overflow-hidden bg-white">
      {/* title bar */}
      <div className={`flex h-[28px] shrink-0 items-center text-[14.200px] text-[#111] ${ui}`}>
        <div className="ml-[3px] bg-[#eee]"><TableauMark size={18} thin /></div>
        <span className="ml-[6px]">Tableau - FINANCIAL PERFORMANCE - Tableau license expires in 13 days</span>
        <div className="ml-auto flex items-center">
          <svg width="12" height="2" viewBox="0 0 12 2" className="mr-[46px]"><rect width="12" height="1" fill="#111" /></svg>
          <svg width="13" height="14" viewBox="0 0 13 14" fill="none" className="mr-[46px]" stroke="#111"><rect x="0.500" y="3" width="9.500" height="10" strokeWidth="1.400" /><path d="M3 3V0.500h9.500V10H10" /></svg>
          <svg width="13" height="13" viewBox="0 0 13 13" fill="none" className="mr-[26px]" stroke="#111"><path d="M0.500 0.500l12 12M12.500 0.500l-12 12" /></svg>
        </div>
      </div>
      {/* thin loading strip at the very top */}
      <div className="absolute left-[809px] top-0 h-px w-[301px] bg-[#dddddd]" />
      <div className="absolute left-[929px] top-0 h-px w-[60px] bg-[#0078d4]" />
      {/* menu */}
      <div className={`flex h-[28px] shrink-0 items-center gap-[20px] pl-[10px] text-[14px] text-[#111] ${ui}`}>
        {menu.map(([a, b, c]) => (
          <span key={a + b + c}>{a}<span className="underline">{b}</span>{c}</span>
        ))}
      </div>
      <Toolbar />
      <div className="flex h-[861px] shrink-0">
        <LeftPanel />
        <div className="bg-white">
          <StoryPanel />
        </div>
        <RightPanel />
      </div>
      <SheetTabs />
      <StatusBar />
      <Taskbar />
    </div>
  );
}
